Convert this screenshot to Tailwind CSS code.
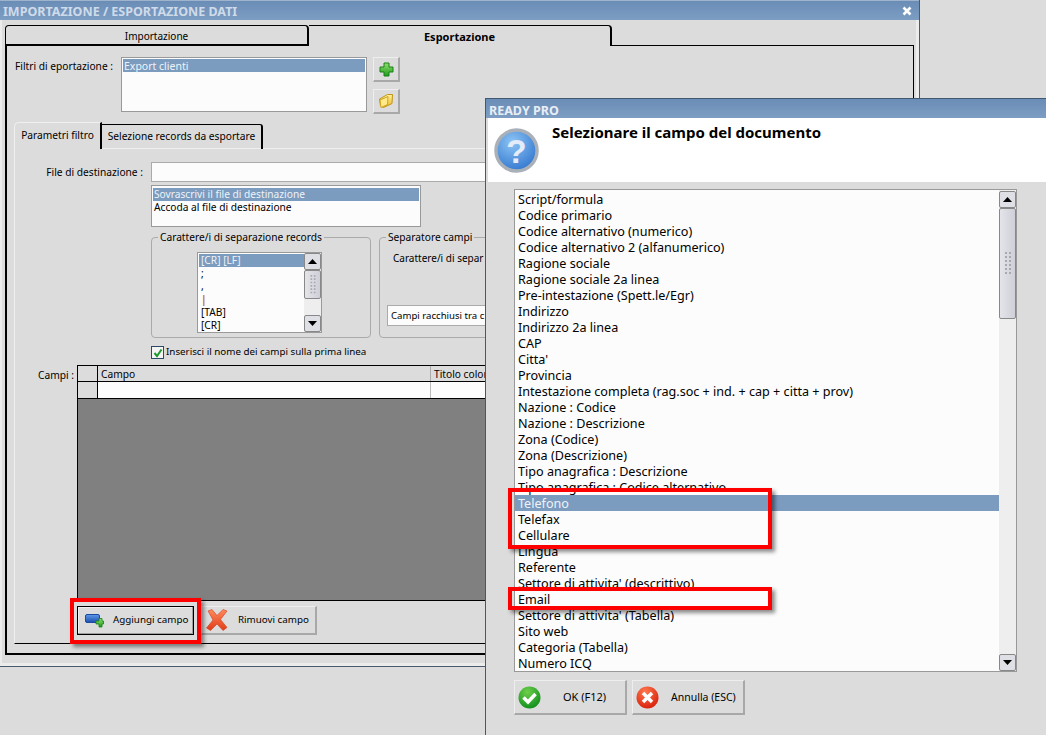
<!DOCTYPE html>
<html lang="en">
<head>
<meta charset="UTF-8">
<script src="https://cdn.jsdelivr.net/npm/@tailwindcss/browser@4"></script>
<title>Importazione / Esportazione dati</title>
</head>
<body class="bg-[#dcdcdc]">
<svg width="0" height="0" class="absolute">
  <defs>
    <linearGradient id="green" x1="0" y1="0" x2="0" y2="1"><stop offset="0" stop-color="#8fe06a"/><stop offset="1" stop-color="#1f9a1f"/></linearGradient>
    <linearGradient id="folder" x1="0" y1="0" x2="0" y2="1"><stop offset="0" stop-color="#fff3a0"/><stop offset="1" stop-color="#e8b820"/></linearGradient>
    <linearGradient id="blue" x1="0" y1="0" x2="0" y2="1"><stop offset="0" stop-color="#5f9ae8"/><stop offset="1" stop-color="#1c4fb0"/></linearGradient>
    <linearGradient id="red" x1="0" y1="0" x2="0" y2="1"><stop offset="0" stop-color="#ff8a5c"/><stop offset="1" stop-color="#e03c18"/></linearGradient>
    <radialGradient id="ball" cx="0.4" cy="0.3" r="0.8"><stop offset="0" stop-color="#8cc4f4"/><stop offset="1" stop-color="#2a70cc"/></radialGradient>
    <radialGradient id="okball" cx="0.4" cy="0.25" r="0.8"><stop offset="0" stop-color="#6fd04a"/><stop offset="1" stop-color="#0c8c1c"/></radialGradient>
    <radialGradient id="noball" cx="0.4" cy="0.25" r="0.8"><stop offset="0" stop-color="#ff7a50"/><stop offset="1" stop-color="#d81c08"/></radialGradient>
    <symbol id="grip" viewBox="0 0 8 24">
      <path d="M1 1h2M5 1h2M1 5h2M5 5h2M1 9h2M5 9h2M1 13h2M5 13h2M1 17h2M5 17h2M1 21h2M5 21h2" stroke="#a8a8b0" stroke-width="2" fill="none"/>
    </symbol>
  </defs>
</svg>

<div class="relative w-[1046px] h-[735px] overflow-hidden bg-[#dcdcdc] text-black font-['Noto_Sans',sans-serif]">

  <!-- main window -->
  <div class="absolute left-0 top-0 w-[920px] h-[667px] flex flex-col border-r border-b border-[#4a5a6a] bg-[#dcdcdc]">
    <div class="h-[20px] shrink-0 flex items-center justify-between pl-[3px] pr-[7px] bg-gradient-to-b from-[#6a8db6] to-[#7d9dc3] border-t border-[#9fb4cc]">
      <span class="text-[12.5px] font-bold leading-none text-[#cfdbe9] pt-[4px]">IMPORTAZIONE / ESPORTAZIONE DATI</span>
      <span class="w-[11px] h-[11px] flex items-center justify-center">
        <svg width="10" height="10" viewBox="0 0 10 10"><path d="M1.5 1.5l7 7M8.5 1.5l-7 7" stroke="#fff" stroke-width="2.6"/></svg>
      </span>
    </div>
    <div class="flex-1 border-l-2 border-r-[3px] border-b-[3px] border-[#ececec] pl-[3px] pt-[5px]">
      <div class="flex h-[20px] relative z-10 text-[10px]">
        <div class="w-[304px] h-[20px] pt-[2px] border-t border-l border-r-2 border-b border-black rounded-t-[4px] flex items-center justify-center">Importazione</div>
        <div class="w-[303px] h-[21px] pt-[3px] border-t border-r-2 border-black rounded-tr-[4px] bg-[#dcdcdc] flex items-center justify-center font-bold text-[11px]">Esportazione</div>
      </div>
      <div class="w-[909px] h-[610px] border-2 border-t border-r border-black border-l-black flex flex-col">
        <!-- filtri -->
        <div class="flex pt-[11px] pl-[8px] text-[10.2px]">
          <div class="w-[106px] pt-[1px] leading-[16px]">Filtri di eportazione :</div>
          <div class="w-[246px] h-[55px] bg-[#fcfcfc] border border-[#999] p-[1px] text-[#eef3f8]">
            <div class="bg-[#7b9bbf] h-[13px] leading-[15px] pl-[1px] text-[10.5px]">Export clienti</div>
          </div>
          <div class="ml-[6px] flex flex-col gap-[7px]">
            <button class="w-[27px] h-[25px] flex items-center justify-center border-r-2 border-b-2 border-[#a8a8a8] border-t border-l border-t-[#eee] border-l-[#eee]">
              <svg width="15" height="15" viewBox="0 0 15 15"><path d="M5 1h5v4h4v5h-4v4H5v-4H1V5h4z" fill="url(#green)" stroke="#188018"/></svg>
            </button>
            <button class="w-[27px] h-[25px] flex items-center justify-center border-r-2 border-b-2 border-[#a8a8a8] border-t border-l border-t-[#eee] border-l-[#eee]">
              <svg width="16" height="16" viewBox="0 0 16 16"><path d="M1.5 6l8-4.5 5 0-.5 9-8.5 4-3-1.5z" fill="url(#folder)" stroke="#c09418"/><path d="M2 7l8-3.5-.5 8-6.5 3z" fill="#ffe98a" stroke="#d0a420"/></svg>
            </button>
          </div>
        </div>

        <!-- inner tabs -->
        <div class="ml-[7px] mt-[8px] flex text-[10.2px] h-[27px] relative z-10">
          <div class="w-[88px] h-[27px] border-t border-l border-[#f0f0f0] border-r-2 border-r-black rounded-tl-[5px] flex items-center justify-center bg-[#dcdcdc]">Parametri filtro</div>
          <div class="w-[161px] h-[25px] mt-[2px] border-t border-r-2 border-black rounded-tr-[3px] flex items-center justify-center">Selezione records da esportare</div>
        </div>
        <div class="ml-[7px] w-[892px] h-[496px] -mt-px border-t border-l border-[#efefef] border-b border-b-black text-[10.2px]">
          <div class="flex pt-[13px] items-center">
            <div class="w-[128px] text-right leading-[20px]">File di destinazione :</div>
            <div class="ml-[8px] w-[700px] h-[20px] bg-[#fcfcfc] border border-[#aaa]"></div>
          </div>
          <div class="ml-[136px] mt-[3px] w-[270px] h-[42px] bg-[#fcfcfc] border border-[#999] p-[1px] pt-[2px] leading-[13px]">
            <div class="bg-[#7b9bbf] text-[#eef3f8] pl-[1px]">Sovrascrivi il file di destinazione</div>
            <div class="pl-[1px]">Accoda al file di destinazione</div>
          </div>
          <div class="flex ml-[136px] mt-[10px] gap-[8px]">
            <fieldset class="relative w-[220px] h-[101px] border border-[#aaa] rounded-[4px]">
              <legend class="absolute -top-[8px] left-[6px] bg-[#dcdcdc] px-[2px] leading-[14px]">Carattere/i di separazione records</legend>
              <div class="ml-[45px] mt-[14px] w-[125px] h-[81px] flex border border-[#999] bg-[#fcfcfc]">
                <div class="w-[106px] pl-[1px] pt-[1px] leading-[13px]">
                  <div class="bg-[#7b9bbf] text-[#eef3f8] pl-[2px]">[CR] [LF]</div>
                  <div class="pl-[2px]">;</div>
                  <div class="pl-[2px]">,</div>
                  <div class="pl-[2px] text-[#c06a10] font-bold">|</div>
                  <div class="pl-[2px]">[TAB]</div>
                  <div class="pl-[2px]">[CR]</div>
                </div>
                <div class="w-[17px] flex flex-col bg-[#eeeeee]">
                  <div class="h-[17px] border border-[#888] rounded-[2px] bg-[#dfdfe6] flex items-center justify-center"><svg width="9" height="5" viewBox="0 0 9 5"><path d="M4.5 0L9 5H0z"/></svg></div>
                  <div class="h-[29px] border border-[#888] rounded-[2px] bg-gradient-to-r from-[#e4e4ea] to-[#cfcfd8] flex items-center justify-center"><svg width="8" height="20"><use href="#grip"/></svg></div>
                  <div class="flex-1"></div>
                  <div class="h-[17px] border border-[#888] rounded-[2px] bg-[#dfdfe6] flex items-center justify-center"><svg width="9" height="5" viewBox="0 0 9 5"><path d="M0 0h9L4.500 5z"/></svg></div>
                </div>
              </div>
            </fieldset>
            <fieldset class="relative w-[480px] h-[101px] border border-[#aaa] rounded-[4px]">
              <legend class="absolute -top-[8px] left-[6px] bg-[#dcdcdc] px-[2px] leading-[14px]">Separatore campi</legend>
              <div class="pl-[13px] pt-[13px] leading-[14px] text-[10px]">Carattere/i di separ</div>
              <div class="ml-[7px] mt-[40px] h-[21px] w-[460px] bg-[#fcfcfc] border border-[#aaa] pl-[3px] leading-[19px] text-[9.6px]">Campi racchiusi tra c</div>
            </fieldset>
          </div>
          <div class="ml-[136px] mt-[8px] flex items-center h-[13px]">
            <span class="w-[13px] h-[13px] border border-[#2c4a66] bg-[#f4f4f4] flex items-center justify-center">
              <svg width="10" height="10" viewBox="0 0 10 10"><path d="M1.500 5l2.500 3L8.500 1.500" stroke="#1e9a2c" stroke-width="2" fill="none"/></svg>
            </span>
            <span class="ml-[2px] text-[9.8px]">Inserisci il nome dei campi sulla prima linea</span>
          </div>
          <div class="flex mt-[6px]">
            <div class="w-[59px] text-right pt-[3px] leading-[14px]">Campi :</div>
            <div class="ml-[3px]">
              <div class="w-[828px] h-[236px] border-t border-l border-b border-black flex flex-col bg-[#808080]">
                <div class="flex h-[16px] bg-[#dcdcdc] border-b border-black leading-[17px]">
                  <div class="w-[20px] border-r border-black"></div>
                  <div class="w-[333px] border-r border-[#aaa] pl-[3px]">Campo</div>
                  <div class="flex-1 pl-[3px]">Titolo colonna</div>
                </div>
                <div class="flex h-[17px] bg-[#fcfcfc] border-b border-black">
                  <div class="w-[20px] bg-[#dcdcdc] border-r border-black"></div>
                  <div class="w-[333px] border-r border-[#bbb]"></div>
                </div>
              </div>
              <div class="flex mt-[5px] gap-[7px] text-[9.8px] whitespace-nowrap">
                <button class="w-[117px] h-[29px] border border-black flex items-center bg-[#dcdcdc] shadow-[inset_-1px_-1px_0_#a0a0a0,inset_1px_1px_0_#f0f0f0]">
                  <svg class="ml-[7px] shrink-0" width="20" height="16" viewBox="0 0 20 16"><rect x="0.500" y="1.500" width="14" height="8" rx="1.500" fill="url(#blue)" stroke="#1c4aa0"/><path d="M12 6h3V3.500h3V6h1.500v3H18v3h-3V9h-3z" transform="translate(-1 2)" fill="url(#green)" stroke="#188018" stroke-width="0.800"/></svg>
                  <span class="ml-[8px]">Aggiungi campo</span>
                </button>
                <button class="w-[116px] h-[29px] flex items-center border-r-2 border-b-2 border-[#a8a8a8] border-t border-l border-t-[#eee] border-l-[#eee]">
                  <svg class="ml-[3px] shrink-0" width="24" height="24" viewBox="0 0 24 24"><path d="M3 3l4-1.500 5 6 6-6 4 1.500-6.500 8.500 6.500 8-4 3-6-6.500-6.500 6.500-4-2.500 6.500-8z" fill="url(#red)" stroke="#d03a18" stroke-width="0.600"/></svg>
                  <span class="ml-[9px]">Rimuovi campo</span>
                </button>
              </div>
            </div>
          </div>
        </div>
      </div>
    </div>
  </div>

  <!-- highlight round the add button -->
  <div class="absolute left-[70px] top-[598px] w-[131px] h-[46px] border-[4px] border-[#ff0000] shadow-[3px_3px_4px_rgba(0,0,0,0.45)]"></div>

  <!-- dialog -->
  <div class="absolute left-[485px] top-[98px] w-[570px] h-[640px] flex flex-col border-l border-t border-[#3f5a72] bg-[#dcdcdc]">
    <div class="h-[19px] shrink-0 bg-gradient-to-b from-[#6a8db6] to-[#7d9dc3] pl-[3px] pt-[5px] flex items-center text-[12.5px] font-bold text-[#e8eef5]">READY PRO</div>
    <div class="h-[64px] shrink-0 bg-white flex ml-[2px]">
      <svg class="ml-[6px] mt-[9px] shrink-0" width="45" height="46" viewBox="0 0 46 47">
        <circle cx="23" cy="24" r="21" fill="url(#ball)" stroke="#aab0b8" stroke-width="3.500"/>
        <text x="23" y="37" text-anchor="middle" font-family="Liberation Sans" font-weight="bold" font-size="34" fill="#e4ecfa">?</text>
      </svg>
      <div class="ml-[13px] pt-[4px] text-[15px] font-bold leading-[20px]">Selezionare il campo del documento</div>
    </div>
    <div class="ml-[2px] pl-[26px] pt-[7px]">
      <div class="w-[503px] h-[483px] flex border border-[#999] bg-[#fcfcfc] text-[12.6px] leading-[18px]">
        <ul class="w-[484px] pt-[1px]">
          <li class="h-[16px] pl-[3px]">Script/formula</li>
          <li class="h-[16px] pl-[3px]">Codice primario</li>
          <li class="h-[16px] pl-[3px]">Codice alternativo (numerico)</li>
          <li class="h-[16px] pl-[3px]">Codice alternativo 2 (alfanumerico)</li>
          <li class="h-[16px] pl-[3px]">Ragione sociale</li>
          <li class="h-[16px] pl-[3px]">Ragione sociale 2a linea</li>
          <li class="h-[16px] pl-[3px]">Pre-intestazione (Spett.le/Egr)</li>
          <li class="h-[16px] pl-[3px]">Indirizzo</li>
          <li class="h-[16px] pl-[3px]">Indirizzo 2a linea</li>
          <li class="h-[16px] pl-[3px]">CAP</li>
          <li class="h-[16px] pl-[3px]">Citta'</li>
          <li class="h-[16px] pl-[3px]">Provincia</li>
          <li class="h-[16px] pl-[3px]">Intestazione completa (rag.soc + ind. + cap + citta + prov)</li>
          <li class="h-[16px] pl-[3px]">Nazione : Codice</li>
          <li class="h-[16px] pl-[3px]">Nazione : Descrizione</li>
          <li class="h-[16px] pl-[3px]">Zona (Codice)</li>
          <li class="h-[16px] pl-[3px]">Zona (Descrizione)</li>
          <li class="h-[16px] pl-[3px]">Tipo anagrafica : Descrizione</li>
          <li class="h-[16px] pl-[3px]">Tipo anagrafica : Codice alternativo</li>
          <li class="h-[16px] pl-[3px] bg-[#7b9bbf] text-[#eef3f8]">Telefono</li>
          <li class="h-[16px] pl-[3px]">Telefax</li>
          <li class="h-[16px] pl-[3px]">Cellulare</li>
          <li class="h-[16px] pl-[3px]">Lingua</li>
          <li class="h-[16px] pl-[3px]">Referente</li>
          <li class="h-[16px] pl-[3px]">Settore di attivita' (descrittivo)</li>
          <li class="h-[16px] pl-[3px]">Email</li>
          <li class="h-[16px] pl-[3px]">Settore di attivita' (Tabella)</li>
          <li class="h-[16px] pl-[3px]">Sito web</li>
          <li class="h-[16px] pl-[3px]">Categoria (Tabella)</li>
          <li class="h-[16px] pl-[3px]">Numero ICQ</li>
        </ul>
        <div class="w-[17px] flex flex-col bg-[#eeeeee] pt-[1px]">
          <div class="h-[17px] border border-[#888] rounded-[2px] bg-[#dfdfe6] flex items-center justify-center"><svg width="9" height="5" viewBox="0 0 9 5"><path d="M4.500 0L9 5H0z"/></svg></div>
          <div class="h-[111px] border border-[#888] rounded-[2px] bg-gradient-to-r from-[#e4e4ea] to-[#cfcfd8] flex items-center justify-center"><svg width="8" height="24"><use href="#grip"/></svg></div>
          <div class="flex-1"></div>
          <div class="h-[17px] border border-[#888] rounded-[2px] bg-[#dfdfe6] flex items-center justify-center"><svg width="9" height="5" viewBox="0 0 9 5"><path d="M0 0h9L4.500 5z"/></svg></div>
        </div>
      </div>
      <div class="flex gap-[5px] mt-[8px] text-[10.5px]">
        <button class="w-[113px] h-[35px] flex items-center border-r-2 border-b-2 border-[#a8a8a8] border-t border-l border-t-[#eee] border-l-[#eee]">
          <svg class="ml-[3px] shrink-0" width="23" height="23" viewBox="0 0 23 23"><circle cx="11.500" cy="11.500" r="11" fill="url(#okball)"/><path d="M5.500 11.500l4.500 4.500 7.500-8" stroke="#fff" stroke-width="3.500" fill="none"/></svg>
          <span class="ml-[22px] pt-[1px] text-[11px]">OK (F12)</span>
        </button>
        <button class="w-[113px] h-[35px] flex items-center border-r-2 border-b-2 border-[#a8a8a8] border-t border-l border-t-[#eee] border-l-[#eee]">
          <svg class="ml-[3px] shrink-0" width="23" height="23" viewBox="0 0 23 23"><circle cx="11.500" cy="11.500" r="11" fill="url(#noball)"/><path d="M7 7l9 9M16 7l-9 9" stroke="#fff" stroke-width="3.500"/></svg>
          <span class="ml-[12px] pt-[1px]">Annulla (ESC)</span>
        </button>
      </div>
    </div>
  </div>

  <!-- highlights over the list -->
  <div class="absolute left-[508px] top-[488px] w-[264px] h-[61px] border-[4px] border-[#ff0000] shadow-[3px_3px_4px_rgba(0,0,0,0.45)]"></div>
  <div class="absolute left-[508px] top-[587px] w-[264px] h-[23px] border-[4px] border-[#ff0000] shadow-[3px_3px_4px_rgba(0,0,0,0.45)]"></div>
</div>
</body>
</html>
